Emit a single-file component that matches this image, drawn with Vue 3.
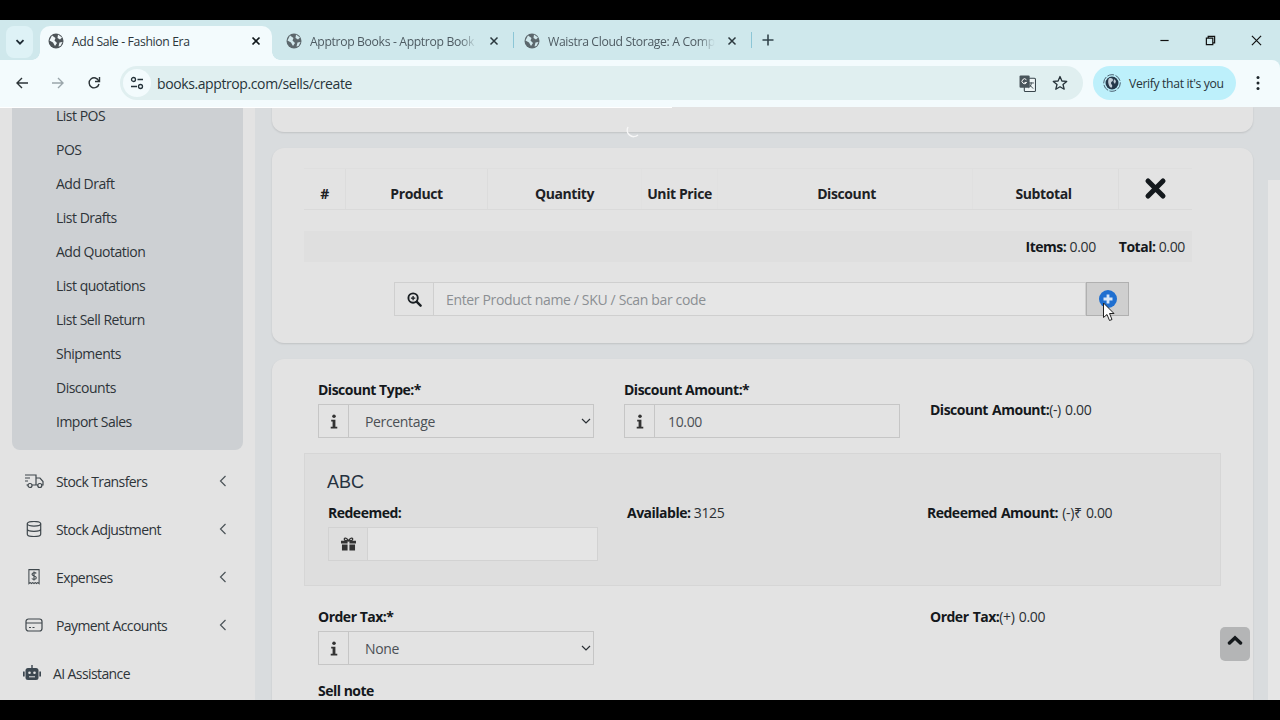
<script setup>
const subItems = ["List POS", "POS", "Add Draft", "List Drafts", "Add Quotation", "List quotations", "List Sell Return", "Shipments", "Discounts", "Import Sales"];
const columns = [
  { label: "#", width: "42px" },
  { label: "Product", width: "142px" },
  { label: "Quantity", width: "154px" },
  { label: "Unit Price", width: "76px" },
  { label: "Discount", width: "255px" },
  { label: "Subtotal", width: "146px" },
];
</script>

<template>
  <div class="screen">
    <div class="black-top"></div>

    <div class="chrome">
      <div class="tabstrip">
        <button class="tab-search">
          <svg width="12" height="12" viewBox="0 0 12 12"><path d="M2.5 4.2 6 7.7l3.5-3.5" fill="none" stroke="#1d2a33" stroke-width="1.8" /></svg>
        </button>
        <div class="tab active">
          <svg class="globe" viewBox="0 0 16 16"><circle cx="8" cy="8" r="7.5" fill="#4d5458" /><path d="M4 2.5 7.5 5 6.5 7.5 9 10 7 13 5 9.500 1.500 7.500ZM10 1.500l4 3-2 2-2.500-1.500ZM11.500 9.500l3-.5-2 4-2 .5Z" fill="#f0f7f9" /></svg>
          <span class="tab-title">Add Sale - Fashion Era</span>
          <svg class="tab-x" viewBox="0 0 10 10"><path d="M1.500 1.500l7 7m0-7-7 7" stroke="#10181c" stroke-width="1.700" /></svg>
        </div>
        <div class="tab second">
          <svg class="globe" viewBox="0 0 16 16"><circle cx="8" cy="8" r="7.500" fill="#5c676c" /><path d="M4 2.500 7.500 5 6.500 7.500 9 10 7 13 5 9.500 1.500 7.500ZM10 1.500l4 3-2 2-2.500-1.500ZM11.500 9.500l3-.5-2 4-2 .5Z" fill="#d2e8ec" /></svg>
          <span class="tab-title fade">Apptrop Books - Apptrop Book</span>
          <svg class="tab-x" viewBox="0 0 10 10"><path d="M1.500 1.500l7 7m0-7-7 7" stroke="#2b383e" stroke-width="1.500" /></svg>
        </div>
        <div class="tab-sep"></div>
        <div class="tab third">
          <svg class="globe" viewBox="0 0 16 16"><circle cx="8" cy="8" r="7.500" fill="#5c676c" /><path d="M4 2.500 7.500 5 6.500 7.500 9 10 7 13 5 9.500 1.500 7.500ZM10 1.500l4 3-2 2-2.500-1.500ZM11.500 9.500l3-.5-2 4-2 .5Z" fill="#d2e8ec" /></svg>
          <span class="tab-title fade">Waistra Cloud Storage: A Comp</span>
          <svg class="tab-x" viewBox="0 0 10 10"><path d="M1.500 1.500l7 7m0-7-7 7" stroke="#2b383e" stroke-width="1.500" /></svg>
        </div>
        <div class="tab-sep"></div>
        <svg class="new-tab" viewBox="0 0 12 12"><path d="M6 .500v11M.500 6h11" stroke="#33444c" stroke-width="1.600" /></svg>
        <div class="win-controls">
          <svg viewBox="0 0 12 12"><path d="M1.500 6h9" stroke="#111" stroke-width="1.300" /></svg>
          <svg viewBox="0 0 12 12"><path d="M1.500 3.500h7v7h-7zM3.500 3.500v-2h7v7h-2" fill="none" stroke="#111" stroke-width="1.300" /></svg>
          <svg viewBox="0 0 12 12"><path d="M1 1l10 10M11 1 1 11" stroke="#111" stroke-width="1.300" /></svg>
        </div>
      </div>

      <div class="toolbar">
        <svg class="nav" viewBox="0 0 14 14"><path d="M13 7H2M7 2 2 7l5 5" fill="none" stroke="#2c3438" stroke-width="1.400" /></svg>
        <svg class="nav" viewBox="0 0 14 14"><path d="M1 7h11M7 2l5 5-5 5" fill="none" stroke="#9aa6ab" stroke-width="1.400" /></svg>
        <svg class="nav" viewBox="0 0 14 14"><path d="M11.800 5A5 5 0 1 0 12 8" fill="none" stroke="#2c3438" stroke-width="1.400" /><path d="M12.500 1v4.500H8" fill="none" stroke="#2c3438" stroke-width="1.400" /></svg>
        <div class="omnibox">
          <span class="site-btn">
            <svg viewBox="0 0 14 14" width="14" height="14"><circle cx="3.500" cy="3.500" r="2" fill="none" stroke="#25333a" stroke-width="1.300" /><path d="M7.500 3.500H13M1 10.500h6" stroke="#25333a" stroke-width="1.300" /><circle cx="10.500" cy="10.500" r="2" fill="none" stroke="#25333a" stroke-width="1.300" /></svg>
          </span>
          <span class="url">books.apptrop.com/sells/create</span>
          <svg class="translate" viewBox="0 0 16 16"><rect x="5" y="3" width="10.500" height="12.500" rx="1" fill="#eef5f6" stroke="#39464c" /><rect x=".500" y=".500" width="9.500" height="11.500" rx="1" fill="#49555b" /><path d="M7 4.500A2.300 2.300 0 1 0 7.200 7H5.200" fill="none" stroke="#fff" stroke-width=".9" /><path d="M9 7.500h5M11.500 7v1c0 2-1.500 3.500-2.500 4M10 9c.5 1.500 2.500 3 3.500 3.500" fill="none" stroke="#39464c" stroke-width=".9" /></svg>
          <svg class="star" viewBox="0 0 16 16"><path d="M8 1.500 9.900 6l4.800.4-3.700 3.100 1.200 4.700L8 11.700l-4.200 2.500L5 9.500 1.300 6.400 6.100 6Z" fill="none" stroke="#27333a" stroke-width="1.300" stroke-linejoin="round" /></svg>
        </div>
        <div class="verify">
          <svg viewBox="0 0 18 18" width="18" height="18"><circle cx="9" cy="9" r="8.300" fill="none" stroke="#3f5264" stroke-width=".9" stroke-dasharray="7 1.500" /><circle cx="9" cy="9" r="6.500" fill="#26384a" /><path d="M6 4.500c2-1 4 0 4 1.500s-2 1.500-2 3 2 2 1 4-3-1-3.500-3S5 5.500 6 4.500ZM11 5l2 2-1 3-1.500-2Z" fill="#c3cfd9" /></svg>
          <span>Verify that it's you</span>
        </div>
        <svg class="dots" viewBox="0 0 4 16"><circle cx="2" cy="2.500" r="1.500" fill="#1d262b" /><circle cx="2" cy="8" r="1.500" fill="#1d262b" /><circle cx="2" cy="13.500" r="1.500" fill="#1d262b" /></svg>
      </div>
    </div>

    <div class="page">
      <div class="load-bar"></div>

      <aside class="sidebar">
        <ul class="submenu">
          <li v-for="item in subItems" :key="item">{{ item }}</li>
        </ul>
        <div class="side-item">
          <svg viewBox="0 0 20 16"><path d="M1 2h11v10H8M4 12H2.500M12 5h4l3 3.500V12h-1.500M14 12h-2M1 5h5M1 8h3" fill="none" stroke="#3f474c" stroke-width="1.200" /><circle cx="6" cy="12.500" r="2" fill="none" stroke="#3f474c" stroke-width="1.200" /><circle cx="15.800" cy="12.500" r="2" fill="none" stroke="#3f474c" stroke-width="1.200" /></svg>
          <span>Stock Transfers</span>
          <svg class="chev" viewBox="0 0 8 12"><path d="M6.500 1 1.500 6l5 5" fill="none" stroke="#4b5358" stroke-width="1.200" /></svg>
        </div>
        <div class="side-item">
          <svg viewBox="0 0 20 16"><ellipse cx="10" cy="2.800" rx="6.700" ry="2.300" fill="none" stroke="#3f474c" stroke-width="1.200" /><path d="M3.300 2.800v10.400c0 1.300 3 2.300 6.700 2.300s6.700-1 6.700-2.300V2.800M3.300 8c0 1.300 3 2.300 6.700 2.300s6.700-1 6.700-2.300" fill="none" stroke="#3f474c" stroke-width="1.200" /></svg>
          <span>Stock Adjustment</span>
          <svg class="chev" viewBox="0 0 8 12"><path d="M6.500 1 1.500 6l5 5" fill="none" stroke="#4b5358" stroke-width="1.200" /></svg>
        </div>
        <div class="side-item">
          <svg viewBox="0 0 20 16"><path d="M4 .600h12v14l-1.500-1-1.500 1-1.500-1-1.500 1-1.500-1-1.500 1-1.500-1-1.500 1Z" transform="translate(1.500 0) scale(.85 1)" fill="none" stroke="#3f474c" stroke-width="1.200" /><path d="M12.300 4.300C11.500 3.300 8 3.300 8 5.300s4.300 1.400 4.300 3.400-3.500 2-4.500.8M10 2.500v9" fill="none" stroke="#3f474c" stroke-width="1.100" /></svg>
          <span>Expenses</span>
          <svg class="chev" viewBox="0 0 8 12"><path d="M6.500 1 1.500 6l5 5" fill="none" stroke="#4b5358" stroke-width="1.200" /></svg>
        </div>
        <div class="side-item">
          <svg viewBox="0 0 20 16"><rect x="2" y="2" width="16" height="12" rx="2.500" fill="none" stroke="#3f474c" stroke-width="1.200" /><path d="M2 6h16M5 10.500h2M8.500 10.500h2" stroke="#3f474c" stroke-width="1.100" /></svg>
          <span>Payment Accounts</span>
          <svg class="chev" viewBox="0 0 8 12"><path d="M6.500 1 1.500 6l5 5" fill="none" stroke="#4b5358" stroke-width="1.200" /></svg>
        </div>
        <div class="side-item ai">
          <svg viewBox="0 0 20 16"><rect x="3.500" y="3" width="13" height="12" rx="2.500" fill="#3c4750" /><rect x="9.300" y="0" width="1.400" height="3" fill="#3c4750" /><rect x="1" y="6.500" width="1.700" height="5" fill="#3c4750" /><rect x="17.300" y="6.500" width="1.700" height="5" fill="#3c4750" /><circle cx="7.500" cy="7.800" r="1.300" fill="#e3e3e3" /><circle cx="12.500" cy="7.800" r="1.300" fill="#e3e3e3" /><path d="M7 11.800h6" stroke="#e3e3e3" stroke-width="1" /></svg>
          <span>AI Assistance</span>
        </div>
      </aside>

      <main class="content">
        <section class="card stub"></section>

        <section class="card products">
          <div class="table-head">
            <div v-for="col in columns" :key="col.label" class="th" :style="{ width: col.width }">{{ col.label }}</div>
            <div class="th close-col">
              <svg viewBox="0 0 20 20" width="23" height="23"><path d="M3.500 3.500l13 13m0-13-13 13" stroke="#14191d" stroke-width="4.400" stroke-linecap="round" /></svg>
            </div>
          </div>
          <div class="totals">
            <span><b>Items:</b> 0.00</span>
            <span><b>Total:</b> 0.00</span>
          </div>
          <div class="search-row">
            <div class="addon search-addon">
              <svg viewBox="0 0 16 16" width="15" height="15"><circle cx="6.500" cy="6.500" r="5" fill="none" stroke="#1a1f23" stroke-width="2" /><path d="M10.500 10.500l4 4" stroke="#1a1f23" stroke-width="2.600" stroke-linecap="round" /><path d="M6.500 4.200v4.600M4.200 6.500h4.600" stroke="#1a1f23" stroke-width="1.400" /></svg>
            </div>
            <input class="search-input" placeholder="Enter Product name / SKU / Scan bar code" />
            <button class="add-btn">
              <svg viewBox="0 0 18 18" width="18" height="18"><circle cx="9" cy="9" r="9" fill="#1f6fd0" /><path d="M9 4.500v9M4.500 9h9" stroke="#d7e6f7" stroke-width="2.800" /></svg>
            </button>
            <svg class="cursor" viewBox="0 0 14 20" width="14" height="20"><path d="M1.500 1v14.500l3.500-3 2.500 6 2.500-1-2.500-6h4.500Z" fill="#fff" stroke="#222" stroke-width="1" /></svg>
          </div>
        </section>

        <section class="card form">
          <div class="form-row">
            <div class="field">
              <label>Discount Type:*</label>
              <div class="group">
                <div class="addon info">
                  <svg viewBox="0 0 8 16" width="8" height="15"><circle cx="4" cy="2.300" r="1.900" fill="#333" /><path d="M1 6h4.500v7.500h2v2H.5v-2h2V8H1Z" fill="#333" /></svg>
                </div>
                <div class="select-wrap">
                  <select class="control"><option>Percentage</option></select>
                  <svg class="caret" viewBox="0 0 10 6" width="10" height="6"><path d="M1 1l4 4 4-4" fill="none" stroke="#2b3035" stroke-width="1.200" /></svg>
                </div>
              </div>
            </div>
            <div class="field amount">
              <label>Discount Amount:*</label>
              <div class="group">
                <div class="addon info">
                  <svg viewBox="0 0 8 16" width="8" height="15"><circle cx="4" cy="2.300" r="1.900" fill="#333" /><path d="M1 6h4.500v7.500h2v2H.5v-2h2V8H1Z" fill="#333" /></svg>
                </div>
                <input class="control" value="10.00" />
              </div>
            </div>
            <div class="result discount-result"><b>Discount Amount:</b>(-) 0.00</div>
          </div>

          <div class="rewards">
            <h4>ABC</h4>
            <div class="rewards-row">
              <div class="redeem">
                <label>Redeemed:</label>
                <div class="group light">
                  <div class="addon gift">
                    <svg viewBox="0 0 16 15" width="15" height="14"><path d="M0 4h7v3H0ZM9 4h7v3H9ZM1 8h6v6.500H1ZM9 8h6v6.500H9Z" fill="#333" /><path d="M8 4C6 .5 3.500.5 3.500 2.300S6 4 8 4c2 0 4.500 0 4.500-1.700S10 .5 8 4Z" fill="none" stroke="#333" stroke-width="1.400" /></svg>
                  </div>
                  <input class="control" />
                </div>
              </div>
              <div class="available"><b>Available:</b> 3125</div>
              <div class="redeemed-amount"><b>Redeemed Amount:</b> (-)₹ 0.00</div>
            </div>
          </div>

          <div class="form-row tax">
            <div class="field">
              <label>Order Tax:*</label>
              <div class="group">
                <div class="addon info">
                  <svg viewBox="0 0 8 16" width="8" height="15"><circle cx="4" cy="2.300" r="1.900" fill="#333" /><path d="M1 6h4.500v7.500h2v2H.5v-2h2V8H1Z" fill="#333" /></svg>
                </div>
                <div class="select-wrap">
                  <select class="control"><option>None</option></select>
                  <svg class="caret" viewBox="0 0 10 6" width="10" height="6"><path d="M1 1l4 4 4-4" fill="none" stroke="#2b3035" stroke-width="1.200" /></svg>
                </div>
              </div>
            </div>
            <div class="result tax-result"><b>Order Tax:</b>(+) 0.00</div>
          </div>
          <label class="sell-note">Sell note</label>
        </section>
      </main>

      <div class="scrollbar"></div>
      <svg class="spinner" viewBox="0 0 16 16" width="16" height="16"><path d="M2 4a6.500 6.500 0 0 0 10 8" fill="none" stroke="#f7f7f7" stroke-width="1.500" /></svg>
      <button class="to-top">
        <svg viewBox="0 0 16 10" width="16" height="10"><path d="M2.500 8 8 2.800 13.500 8" fill="none" stroke="#15191c" stroke-width="3.500" stroke-linecap="round" /></svg>
      </button>
    </div>

    <div class="black-bottom"></div>
  </div>
</template>

<style scoped>
.screen {
  width: 1280px;
  height: 720px;
  display: flex;
  flex-direction: column;
  overflow: hidden;
  background: #000;
  font-family: "Open Sans", "Noto Sans", sans-serif;
  font-size: 14px;
  letter-spacing: -0.35px;
  color: #2a2f33;
}
.black-top {
  height: 20px;
  flex: none;
}
.black-bottom {
  height: 20px;
  flex: none;
}

/* browser chrome */
.chrome {
  flex: none;
  background: #cfe8ec;
}
.tabstrip {
  height: 40px;
  display: flex;
  align-items: flex-end;
  padding-left: 6px;
}
.tab-search {
  width: 27px;
  height: 32px;
  margin-bottom: 2px;
  background: #def2f6;
  border: 0;
  border-radius: 8px;
  display: flex;
  align-items: center;
  justify-content: center;
  padding: 0;
}
.tab {
  height: 34px;
  display: flex;
  align-items: center;
  font-size: 12.2px;
  color: #4e5b62;
  padding-bottom: 4px;
  box-sizing: border-box;
  flex: none;
}
.tab.active {
  width: 232px;
  margin-left: 7px;
  padding-left: 8px;
  background: #f3fbfd;
  border-radius: 10px 10px 0 0;
  color: #2c363b;
  position: relative;
}
.tab.active::before,
.tab.active::after {
  content: "";
  position: absolute;
  bottom: 0;
  width: 8px;
  height: 8px;
}
.tab.active::before {
  left: -8px;
  background: radial-gradient(circle at 0 0, transparent 7.5px, #f3fbfd 8px);
}
.tab.active::after {
  right: -8px;
  background: radial-gradient(circle at 100% 0, transparent 7.5px, #f3fbfd 8px);
}
.tab.active .tab-x {
  margin-right: 11px;
}
.tab.second {
  width: 241px;
  padding-left: 14px;
}
.tab.second .tab-x {
  margin-right: 14px;
}
.tab.third {
  width: 237px;
  padding-left: 10px;
}
.tab.third .tab-x {
  margin-right: 15px;
}
.globe {
  width: 16px;
  height: 16px;
  flex: none;
  margin-right: 8px;
}
.tab-title {
  flex: 1;
  white-space: nowrap;
}
.fade {
  -webkit-mask-image: linear-gradient(90deg, #000 90%, transparent);
  mask-image: linear-gradient(90deg, #000 90%, transparent);
}
.tab-x {
  width: 10px;
  height: 10px;
  flex: none;
  margin-left: 12px;
}
.tab-sep {
  width: 1px;
  height: 16px;
  background: #8cc6d6;
  margin-bottom: 12px;
  flex: none;
}
.new-tab {
  width: 12px;
  height: 12px;
  margin: 0 0 14px 10px;
}
.win-controls {
  margin-left: auto;
  display: flex;
  gap: 35px;
  padding-right: 18px;
  margin-bottom: 14px;
}
.win-controls svg {
  width: 11px;
  height: 11px;
}
.toolbar {
  height: 47px;
  background: #f3fbfd;
  border-radius: 0 8px 0 0;
  display: flex;
  align-items: center;
  padding: 0 0 1px 15px;
  box-sizing: border-box;
}
.nav {
  width: 14px;
  height: 14px;
  flex: none;
  margin-right: 22px;
}
.omnibox {
  width: 963px;
  height: 34px;
  margin-left: -3px;
  background: #e0eff0;
  border-radius: 17px;
  display: flex;
  align-items: center;
  flex: none;
  box-sizing: border-box;
  padding-right: 15px;
}
.site-btn {
  width: 28px;
  height: 28px;
  margin-left: 3px;
  background: #f3fbfd;
  border-radius: 50%;
  display: flex;
  align-items: center;
  justify-content: center;
}
.url {
  margin-left: 6px;
  font-size: 14px;
  letter-spacing: -0.4px;
  color: #27343a;
}
.translate {
  width: 17px;
  height: 17px;
  margin-left: auto;
}
.star {
  width: 16px;
  height: 16px;
  margin-left: 16px;
}
.verify {
  margin-left: 10px;
  width: 143px;
  height: 34px;
  background: #bdf0fb;
  border-radius: 17px;
  display: flex;
  align-items: center;
  gap: 8px;
  padding-left: 10px;
  box-sizing: border-box;
  font-size: 12.2px;
  color: #27343a;
  flex: none;
}
.dots {
  width: 4px;
  height: 16px;
  margin-left: 20px;
}

/* page */
.page {
  flex: 1;
  min-height: 0;
  display: flex;
  background: #d9dcde;
  position: relative;
  overflow: hidden;
}
.load-bar {
  position: absolute;
  top: 0;
  left: 0;
  width: 672px;
  height: 1px;
  background: #fff;
}
.sidebar {
  width: 255px;
  flex: none;
  background: #e3e3e3;
  overflow: hidden;
}
.submenu {
  list-style: none;
  margin: 0 12px;
  padding: 0 0 11px 44px;
  background: #cdd0d3;
  border-radius: 0 0 8px 8px;
  letter-spacing: -0.5px;
}
.submenu li {
  height: 34px;
  line-height: 34px;
  color: #2e3439;
}
.submenu li:first-child {
  height: 26px;
  line-height: 18px;
}
.side-item {
  height: 48px;
  display: flex;
  align-items: center;
  padding-left: 24px;
  color: #2e3439;
  letter-spacing: -0.6px;
}
.submenu + .side-item {
  margin-top: 7px;
}
.side-item > svg:first-child {
  width: 20px;
  height: 16px;
  margin-right: 12px;
  flex: none;
}
.side-item.ai {
  padding-left: 22px;
}
.side-item.ai > svg:first-child {
  margin-right: 11px;
}
.chev {
  width: 8px;
  height: 12px;
  margin-left: auto;
  margin-right: 28px;
}
.content {
  flex: 1;
  min-width: 0;
  padding: 0 27px 0 17px;
  display: flex;
  flex-direction: column;
  gap: 16px;
  overflow: hidden;
}
.card {
  background: #e3e3e3;
  border-radius: 12px;
  box-shadow: 0 1px 2px rgba(0, 0, 0, 0.12);
  flex: none;
}
.stub {
  height: 25px;
  border-radius: 0 0 12px 12px;
}
.products {
  height: 195px;
  padding: 20px 61px 0 32px;
  box-sizing: border-box;
}
.table-head {
  display: flex;
  height: 42px;
  border-top: 1px solid #dfdfdf;
  border-bottom: 1px solid #dadada;
  box-sizing: border-box;
}
.th {
  font-weight: 700;
  letter-spacing: -0.4px;
  color: #1d2125;
  display: flex;
  align-items: center;
  justify-content: center;
  border-right: 1px solid #e0e0e0;
  box-sizing: border-box;
  padding-top: 8px;
}
.th:nth-child(1),
.th:nth-child(2),
.th:nth-child(6) {
  border-right-color: #dcdcdc;
}
.th:nth-child(3),
.th:nth-child(4) {
  border-right-color: #e1e1e1;
}
.th:nth-child(5) {
  padding-left: 3px;
}
.th:nth-child(6) {
  padding-right: 4px;
}
.close-col {
  flex: 1;
  border: 0;
  padding-top: 0;
  padding-bottom: 2px;
}
.totals {
  margin-top: 21px;
  height: 31px;
  background: #dfdfdf;
  display: flex;
  align-items: center;
  justify-content: flex-end;
  gap: 23px;
  padding-right: 7px;
  color: #2b2f33;
}
b {
  font-weight: 700;
  letter-spacing: -0.5px;
  color: #14181c;
}
.search-row {
  margin: 20px 0 0 90px;
  width: 735px;
  height: 34px;
  display: flex;
  position: relative;
}
.addon {
  flex: none;
  display: flex;
  align-items: center;
  justify-content: center;
  border: 1px solid #cfcfcf;
  box-sizing: border-box;
}
.search-addon {
  width: 40px;
  background: #e3e3e3;
}
.search-input {
  flex: 1;
  min-width: 0;
  height: 100%;
  box-sizing: border-box;
  background: #e6e6e6;
  border: 1px solid #cfcfcf;
  border-left: 0;
  padding: 0 12px;
  font: inherit;
  letter-spacing: inherit;
  outline: 0;
}
.search-input::placeholder {
  color: #8b8f93;
  opacity: 1;
}
.add-btn {
  width: 43px;
  height: 100%;
  flex: none;
  background: #cfcfcf;
  border: 1px solid #b0b0b0;
  padding: 0;
  display: flex;
  align-items: center;
  justify-content: center;
}
.cursor {
  position: absolute;
  left: 708px;
  top: 20px;
}
.form {
  height: 400px;
  padding: 21px 32px 0;
  box-sizing: border-box;
}
.form-row {
  display: flex;
  padding-left: 14px;
}
.field {
  width: 276px;
}
.field.amount {
  margin-left: 30px;
}
label {
  display: block;
  font-weight: 700;
  letter-spacing: -0.5px;
  color: #14181c;
  height: 20px;
  line-height: 20px;
  margin-bottom: 4px;
}
.group {
  display: flex;
  height: 34px;
}
.info {
  width: 30px;
  border-color: #c6c6c6;
  border-right: 0;
}
.select-wrap {
  flex: 1;
  min-width: 0;
  display: flex;
  position: relative;
}
.caret {
  position: absolute;
  right: 3px;
  top: 14px;
  pointer-events: none;
}
.control {
  flex: 1;
  min-width: 0;
  height: 100%;
  box-sizing: border-box;
  border: 1px solid #c6c6c6;
  background: #e3e3e3;
  border-radius: 0;
  padding: 0 13px;
  font: inherit;
  letter-spacing: inherit;
  color: #4b5055;
  outline: 0;
}
select.control {
  appearance: none;
  -webkit-appearance: none;
  padding-left: 16px;
}
.result {
  margin-left: 30px;
  word-spacing: 1px;
}
.discount-result {
  margin-top: 20px;
}
.rewards {
  margin-top: 15px;
  height: 133px;
  background: #dedede;
  border: 1px solid #d6d6d6;
  box-sizing: border-box;
  padding: 15px 22px 0;
}
.rewards h4 {
  margin: 0;
  font: 400 18px/26px "Liberation Sans", sans-serif;
  letter-spacing: 0;
  color: #25323f;
}
.rewards-row {
  display: flex;
  margin: 8px 0 0 1px;
}
.redeem {
  width: 270px;
}
.group.light .control {
  background: #e5e5e5;
  border-color: #d2d2d2;
}
.gift {
  width: 39px;
  border-color: #d2d2d2;
  border-right: 0;
}
.available {
  margin-left: 29px;
  line-height: 20px;
  width: 300px;
}
.redeemed-amount {
  line-height: 20px;
  word-spacing: 1px;
}
.form-row.tax {
  margin-top: 21px;
}
.tax-result {
  margin-left: 336px;
  line-height: 20px;
}
.sell-note {
  margin: 16px 0 0 14px;
}
.scrollbar {
  position: absolute;
  right: 0;
  top: 73px;
  bottom: 0;
  width: 12px;
  background: #e6e6e6;
}
.spinner {
  position: absolute;
  left: 626px;
  top: 16px;
}
.to-top {
  position: absolute;
  left: 1220px;
  top: 520px;
  width: 30px;
  height: 34px;
  padding: 0;
  border: 0;
  border-radius: 5px;
  background: #b4b5b6;
  display: flex;
  justify-content: center;
  padding-top: 8px;
  box-sizing: border-box;
}
</style>
